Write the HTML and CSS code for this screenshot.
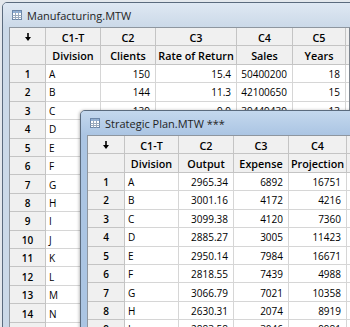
FILE: index.html
```html
<!DOCTYPE html>
<html lang="en">
<head>
    <meta charset="UTF-8">
    <meta name="viewport" content="width=device-width, initial-scale=1.0">
    <title>Minitab Worksheets</title>
    <link rel="stylesheet" href="styles.css">
</head>
<body>
    <!-- inactive worksheet, behind -->
    <div class="win win-back">
        <div class="titlebar">
            <svg class="sheet-icon" width="10" height="10" viewBox="0 0 10 10">
                <rect x="0.5" y="0.5" width="9" height="9" fill="#fff" stroke="#6d87a8"/>
                <rect x="1" y="1" width="8" height="2" fill="#8fb0d8"/>
                <path d="M0.5 5.5H9.5M0.5 7.5H9.5M3.5 1V9.5M6.5 1V9.5" stroke="#9aaabd" stroke-width="1"/>
            </svg>
            <span>Manufacturing.MTW</span>
        </div>
        <div class="sheet sheet-a">
            <div class="row head"><div class="rn"><svg width="6" height="8" viewBox="0 0 6 8"><path d="M3 0V5" stroke="#000" stroke-width="1.6"/><path d="M0 4H6L3 8Z" fill="#000"/></svg></div><div>C1-T</div><div>C2</div><div>C3</div><div>C4</div><div>C5</div><div></div></div>
            <div class="row head"><div class="rn"></div><div>Division</div><div>Clients</div><div>Rate of Return</div><div>Sales</div><div>Years</div><div></div></div>
            <div class="row"><div class="rn">1</div><div class="txt">A</div><div>150</div><div>15.4</div><div>50400200</div><div>18</div><div></div></div>
            <div class="row"><div class="rn">2</div><div class="txt">B</div><div>144</div><div>11.3</div><div>42100650</div><div>15</div><div></div></div>
            <div class="row"><div class="rn">3</div><div class="txt">C</div><div>139</div><div>9.9</div><div>39449439</div><div>13</div><div></div></div>
            <div class="row"><div class="rn">4</div><div class="txt">D</div><div></div><div></div><div></div><div></div><div></div></div>
            <div class="row"><div class="rn">5</div><div class="txt">E</div><div></div><div></div><div></div><div></div><div></div></div>
            <div class="row"><div class="rn">6</div><div class="txt">F</div><div></div><div></div><div></div><div></div><div></div></div>
            <div class="row"><div class="rn">7</div><div class="txt">G</div><div></div><div></div><div></div><div></div><div></div></div>
            <div class="row"><div class="rn">8</div><div class="txt">H</div><div></div><div></div><div></div><div></div><div></div></div>
            <div class="row"><div class="rn">9</div><div class="txt">I</div><div></div><div></div><div></div><div></div><div></div></div>
            <div class="row"><div class="rn">10</div><div class="txt">J</div><div></div><div></div><div></div><div></div><div></div></div>
            <div class="row"><div class="rn">11</div><div class="txt">K</div><div></div><div></div><div></div><div></div><div></div></div>
            <div class="row"><div class="rn">12</div><div class="txt">L</div><div></div><div></div><div></div><div></div><div></div></div>
            <div class="row"><div class="rn">13</div><div class="txt">M</div><div></div><div></div><div></div><div></div><div></div></div>
            <div class="row"><div class="rn">14</div><div class="txt">N</div><div></div><div></div><div></div><div></div><div></div></div>
            <div class="row"><div class="rn">15</div><div class="txt"></div><div></div><div></div><div></div><div></div><div></div></div>
        </div>
    </div>

    <!-- active worksheet, on top -->
    <div class="win win-front">
        <div class="titlebar">
            <svg class="sheet-icon" width="10" height="10" viewBox="0 0 10 10">
                <rect x="0.5" y="0.5" width="9" height="9" fill="#fff" stroke="#6d87a8"/>
                <rect x="1" y="1" width="8" height="2" fill="#8fb0d8"/>
                <path d="M0.5 5.5H9.5M0.5 7.5H9.5M3.5 1V9.5M6.5 1V9.5" stroke="#9aaabd" stroke-width="1"/>
            </svg>
            <span>Strategic Plan.MTW ***</span>
        </div>
        <div class="sheet sheet-b">
            <div class="row head"><div class="rn"><svg width="6" height="8" viewBox="0 0 6 8"><path d="M3 0V5" stroke="#000" stroke-width="1.6"/><path d="M0 4H6L3 8Z" fill="#000"/></svg></div><div>C1-T</div><div>C2</div><div>C3</div><div>C4</div><div></div></div>
            <div class="row head"><div class="rn"></div><div>Division</div><div>Output</div><div>Expense</div><div>Projection</div><div></div></div>
            <div class="row"><div class="rn">1</div><div class="txt">A</div><div>2965.34</div><div>6892</div><div>16751</div><div></div></div>
            <div class="row"><div class="rn">2</div><div class="txt">B</div><div>3001.16</div><div>4172</div><div>4216</div><div></div></div>
            <div class="row"><div class="rn">3</div><div class="txt">C</div><div>3099.38</div><div>4120</div><div>7360</div><div></div></div>
            <div class="row"><div class="rn">4</div><div class="txt">D</div><div>2885.27</div><div>3005</div><div>11423</div><div></div></div>
            <div class="row"><div class="rn">5</div><div class="txt">E</div><div>2950.14</div><div>7984</div><div>16671</div><div></div></div>
            <div class="row"><div class="rn">6</div><div class="txt">F</div><div>2818.55</div><div>7439</div><div>4988</div><div></div></div>
            <div class="row"><div class="rn">7</div><div class="txt">G</div><div>3066.79</div><div>7021</div><div>10358</div><div></div></div>
            <div class="row"><div class="rn">8</div><div class="txt">H</div><div>2630.31</div><div>2074</div><div>8919</div><div></div></div>
            <div class="row"><div class="rn">9</div><div class="txt">I</div><div>2883.58</div><div>3046</div><div>9981</div><div></div></div>
        </div>
    </div>
</body>
</html>
```

FILE: styles.css
```css
html, body{
    margin: 0;
    height: 100%;
    overflow: hidden;
}
body{
    background-color: #e4e8ed;
    font-family: "Open Sans", "Noto Sans", sans-serif;
    font-size: 10px;
    color: #000;
    position: relative;
}

/* window frame */
.win{
    box-sizing: border-box;
    border: 1px solid #5b6b7e;
    border-radius: 5px 5px 0 0;
    padding: 0 6px;
    height: 400px;
}
.win-back{
    margin: 2px 0 0 2px;
    width: 355px;
    background: #cbd9e8;
}
.win-front{
    position: absolute;
    left: 80px;
    top: 110px;
    width: 300px;
    background: #abc5e3;
    box-shadow: -1px 0 3px rgba(0, 0, 0, 0.25);
}
.titlebar{
    height: 24px;
    display: flex;
    align-items: center;
    gap: 5px;
    margin: 0 -6px;
    padding-left: 9px;
    border-radius: 4px 4px 0 0;
    font-size: 11px;
    color: #1f1f1f;
}
.win-back .titlebar{
    background: linear-gradient(#dfe8f3, #cbd9e8);
}
.win-front .titlebar{
    background: linear-gradient(#c4d8ee, #abc5e3);
}
.sheet-icon{
    flex: none;
}

/* worksheet grid */
.sheet{
    background: #fff;
    border-top: 1px solid #8e969f;
    border-left: 1px solid #8e969f;
    overflow: hidden;
}
.sheet-a{
    border-right: 1px solid #7d858e;
}
.row{
    display: grid;
    height: 18.43px;
}
.sheet-a .row{
    grid-template-columns: 36px 55px 55px 81px 56px 53px 60px;
}
.sheet-b .row{
    grid-template-columns: 37px 54px 55px 55px 58px 60px;
}
.row > div{
    box-sizing: border-box;
    border-right: 1px solid #d6d6d6;
    border-bottom: 1px solid #d6d6d6;
    padding: 1px 5px 0 3px;
    display: flex;
    align-items: center;
    justify-content: flex-end;
    white-space: nowrap;
    overflow: hidden;
}
.row > .txt{
    justify-content: flex-start;
}
.row > .rn,
.head > div{
    background-color: #f0f0f0;
    border-color: #c4c4c4;
    justify-content: center;
    font-weight: 600;
    padding: 1px 0 0;
}
.head > div{
    font-size: 10.8px;
}
```
